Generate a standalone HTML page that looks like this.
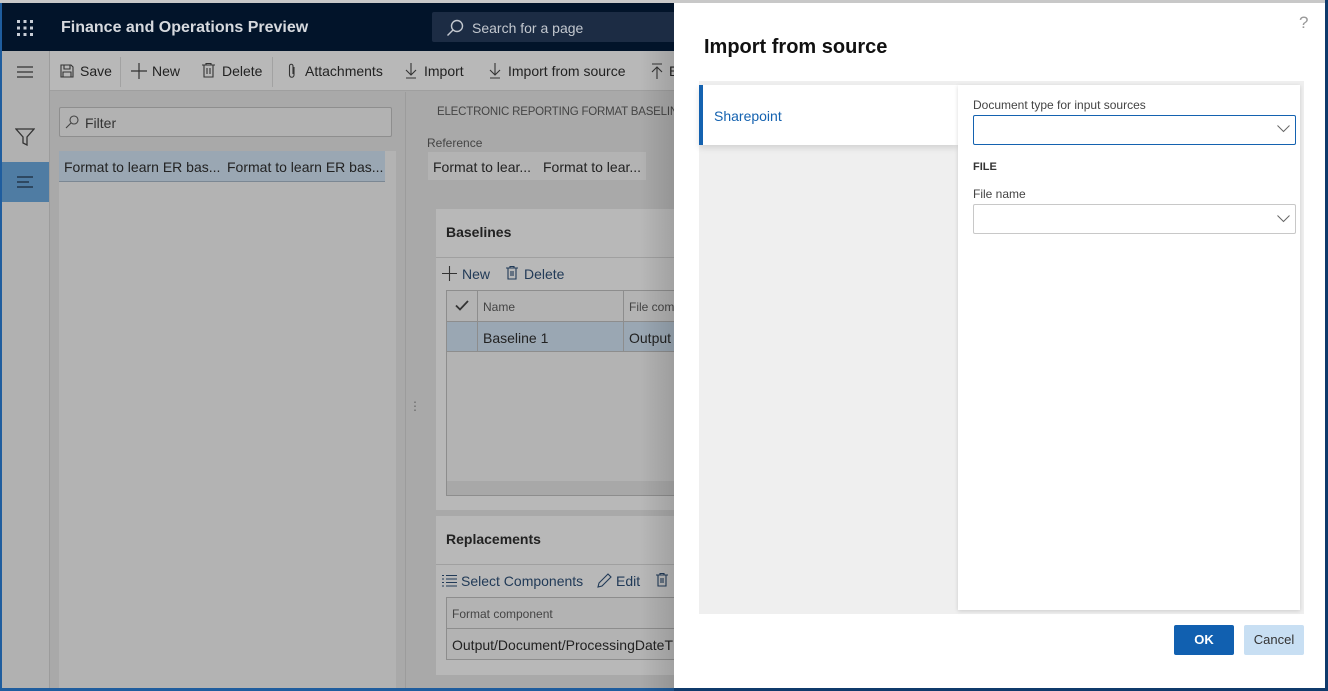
<!DOCTYPE html>
<html><head><meta charset="utf-8">
<style>
*{box-sizing:border-box;margin:0;padding:0}
body{width:1328px;height:691px;overflow:hidden;position:relative;font-family:"Liberation Sans",sans-serif;font-size:14px;color:#222;background:#a9a9a9}
.abs{position:absolute}
.t{position:absolute;white-space:nowrap}
svg{position:absolute}
</style></head><body>
<div class="abs" style="left:0;top:0;width:1328px;height:3px;background:#c8c8c8"></div>
<div class="abs" style="left:0;top:3px;width:2px;height:688px;background:#1f5d9e"></div>
<div class="abs" style="left:2px;top:3px;width:672px;height:48px;background:#02142a"></div>
<svg style="left:16px;top:19px" width="18" height="18" viewBox="0 0 18 18" fill="#c9ced6"><g><rect x="1" y="1" width="3" height="3"/><rect x="7.5" y="1" width="3" height="3"/><rect x="14" y="1" width="3" height="3"/><rect x="1" y="7.5" width="3" height="3"/><rect x="7.5" y="7.5" width="3" height="3"/><rect x="14" y="7.5" width="3" height="3"/><rect x="1" y="14" width="3" height="3"/><rect x="7.5" y="14" width="3" height="3"/><rect x="14" y="14" width="3" height="3"/></g></svg>
<div class="t" style="left:61px;top:19px;color:#d6d9de;font-size:16px;font-weight:bold">Finance and Operations Preview</div>
<div class="abs" style="left:432px;top:12px;width:242px;height:30px;background:#1c2c44;border-radius:2px 0 0 2px"></div>
<svg style="left:446px;top:19px" width="18" height="18" viewBox="0 0 18 18" fill="none" stroke="#c3c8cf" stroke-width="1.4"><circle cx="11" cy="7" r="5.5"/><path d="M7 11 L1.5 16.5"/></svg>
<div class="t" style="left:472px;top:20px;color:#c3c8cf;font-size:14px">Search for a page</div>
<div class="abs" style="left:2px;top:51px;width:48px;height:640px;background:#b1b1b1;border-right:1px solid #9c9c9c"></div>
<svg style="left:16px;top:65px" width="18" height="14" viewBox="0 0 18 14" stroke="#333" stroke-width="1.3"><path d="M1 2H17M1 7H17M1 12H17"/></svg>
<svg style="left:15px;top:128px" width="20" height="18" viewBox="0 0 20 18" fill="none" stroke="#333" stroke-width="1.3"><path d="M1 1H19L12 9V17L8 15V9Z"/></svg>
<div class="abs" style="left:2px;top:162px;width:47px;height:40px;background:#4f7ca3"></div>
<svg style="left:17px;top:175px" width="18" height="14" viewBox="0 0 18 14" stroke="#1b2a3a" stroke-width="1.2"><path d="M0 2H16M0 7H12M0 12H16"/></svg>
<div class="abs" style="left:50px;top:51px;width:624px;height:40px;background:#b8b8b8;border-bottom:1px solid #9f9f9f"></div>
<svg style="left:60px;top:64px" width="14" height="14" viewBox="0 0 14 14" fill="none" stroke="#333" stroke-width="1.1"><path d="M1 1H11L13 3V13H1Z M4 1V5H10V1 M3 13V8H11V13"/></svg>
<div class="t" style="left:80px;top:63px">Save</div>
<div class="abs" style="left:120px;top:57px;width:1px;height:30px;background:#a2a2a2"></div>
<svg style="left:131px;top:63px" width="16" height="16" viewBox="0 0 16 16" stroke="#333" stroke-width="1.2"><path d="M8 0V16M0 8H16"/></svg>
<div class="t" style="left:152px;top:63px">New</div>
<svg style="left:202px;top:63px" width="13" height="15" viewBox="0 0 13 15" fill="none" stroke="#333" stroke-width="1.1"><path d="M0 2H13M4 2V0.5H9V2M2 2V14H11V2M5 5V11M8 5V11"/></svg>
<div class="t" style="left:222px;top:63px">Delete</div>
<div class="abs" style="left:272px;top:57px;width:1px;height:30px;background:#a2a2a2"></div>
<svg style="left:287px;top:63px" width="10" height="16" viewBox="0 0 10 16" fill="none" stroke="#333" stroke-width="1.1"><path d="M7 4V12A2.2 2.2 0 0 1 2.5 12V3A1.6 1.6 0 0 1 6 3V11"/></svg>
<div class="t" style="left:305px;top:63px">Attachments</div>
<svg style="left:405px;top:63px" width="12" height="16" viewBox="0 0 12 16" fill="none" stroke="#333" stroke-width="1.1"><path d="M6 0V12M1 7L6 12L11 7M1 15H11"/></svg>
<div class="t" style="left:424px;top:63px">Import</div>
<svg style="left:489px;top:63px" width="12" height="16" viewBox="0 0 12 16" fill="none" stroke="#333" stroke-width="1.1"><path d="M6 0V12M1 7L6 12L11 7M1 15H11"/></svg>
<div class="t" style="left:508px;top:63px">Import from source</div>
<svg style="left:651px;top:63px" width="12" height="16" viewBox="0 0 12 16" fill="none" stroke="#333" stroke-width="1.1"><path d="M6 16V4M1 9L6 4L11 9M1 1H11"/></svg>
<div class="t" style="left:669px;top:63px">E</div>
<div class="abs" style="left:50px;top:92px;width:356px;height:599px;background:#a9a9a9;border-right:1px solid #9c9c9c"></div>
<div class="abs" style="left:59px;top:107px;width:333px;height:30px;border:1px solid #8e8e8e;background:#b2b2b2;border-radius:2px"></div>
<svg style="left:65px;top:115px" width="14" height="14" viewBox="0 0 14 14" fill="none" stroke="#444" stroke-width="1.1"><circle cx="9" cy="5" r="4"/><path d="M6 8L1 13"/></svg>
<div class="t" style="left:85px;top:115px;color:#333">Filter</div>
<div class="abs" style="left:59px;top:151px;width:337px;height:538px;background:#b3b3b3"></div>
<div class="abs" style="left:59px;top:151px;width:326px;height:31px;background:#9aa7b3;border-bottom:1px solid #7b8793"></div>
<div class="t" style="left:64px;top:159px">Format to learn ER bas...</div>
<div class="t" style="left:227px;top:159px">Format to learn ER bas...</div>
<div class="abs" style="left:407px;top:92px;width:267px;height:599px;background:#a9a9a9"></div>
<div class="t" style="left:409px;top:399px;color:#666;font-size:12px">⋮</div>
<div class="t" style="left:437px;top:106px;font-size:11.5px;letter-spacing:-0.2px;color:#444">ELECTRONIC REPORTING FORMAT BASELINE</div>
<div class="t" style="left:427px;top:136px;font-size:12px;color:#444">Reference</div>
<div class="abs" style="left:428px;top:152px;width:218px;height:28px;background:#b3b3b3"></div>
<div class="t" style="left:433px;top:159px">Format to lear...</div>
<div class="t" style="left:543px;top:159px">Format to lear...</div>
<div class="abs" style="left:436px;top:209px;width:238px;height:301px;background:#b8b8b8"></div>
<div class="t" style="left:446px;top:224px;font-weight:bold;font-size:14px">Baselines</div>
<div class="abs" style="left:436px;top:257px;width:238px;height:1px;background:#a0a0a0"></div>
<svg style="left:442px;top:266px" width="15" height="15" viewBox="0 0 15 15" stroke="#333" stroke-width="1.1"><path d="M7.5 0V15M0 7.5H15"/></svg>
<div class="t" style="left:462px;top:266px;color:#213a57">New</div>
<svg style="left:506px;top:266px" width="12" height="14" viewBox="0 0 12 14" fill="none" stroke="#213a57" stroke-width="1.1"><path d="M0 2H12M4 2V0.5H8V2M2 2V13H10V2M5 5V10M7 5V10"/></svg>
<div class="t" style="left:524px;top:266px;color:#213a57">Delete</div>
<div class="abs" style="left:446px;top:290px;width:228px;height:206px;border:1px solid #8d8d8d;border-right:none;background:#b3b3b3"></div>
<div class="abs" style="left:447px;top:321px;width:227px;height:1px;background:#8d8d8d"></div>
<div class="abs" style="left:477px;top:291px;width:1px;height:61px;background:#8d8d8d"></div>
<div class="abs" style="left:623px;top:291px;width:1px;height:61px;background:#8d8d8d"></div>
<svg style="left:455px;top:300px" width="14" height="11" viewBox="0 0 14 11" fill="none" stroke="#333" stroke-width="1.8"><path d="M1 5.5L5 9.5L13 1"/></svg>
<div class="t" style="left:483px;top:300px;font-size:12px;color:#444">Name</div>
<div class="t" style="left:629px;top:300px;font-size:12px;color:#444">File com</div>
<div class="abs" style="left:447px;top:322px;width:227px;height:30px;background:#9aa7b3;border-bottom:1px solid #8d8d8d"></div>
<div class="abs" style="left:477px;top:322px;width:1px;height:30px;background:#8d8d8d"></div>
<div class="abs" style="left:623px;top:322px;width:1px;height:30px;background:#8d8d8d"></div>
<div class="t" style="left:483px;top:330px">Baseline 1</div>
<div class="t" style="left:629px;top:330px">Output</div>
<div class="abs" style="left:447px;top:481px;width:227px;height:14px;background:#a8a8a8"></div>
<div class="abs" style="left:436px;top:516px;width:238px;height:159px;background:#b8b8b8"></div>
<div class="t" style="left:446px;top:531px;font-weight:bold">Replacements</div>
<div class="abs" style="left:436px;top:564px;width:238px;height:1px;background:#a0a0a0"></div>
<svg style="left:442px;top:574px" width="15" height="13" viewBox="0 0 15 13" stroke="#213a57" stroke-width="1.1"><path d="M4 1.5H15M4 5H15M4 8.5H15M4 12H15M0 1.5H2M0 5H2M0 8.5H2M0 12H2"/></svg>
<div class="t" style="left:461px;top:573px;color:#213a57">Select Components</div>
<svg style="left:597px;top:573px" width="15" height="15" viewBox="0 0 15 15" fill="none" stroke="#213a57" stroke-width="1.1"><path d="M1 14L2 10L11 1L14 4L5 13Z"/></svg>
<div class="t" style="left:616px;top:573px;color:#213a57">Edit</div>
<svg style="left:656px;top:573px" width="12" height="14" viewBox="0 0 12 14" fill="none" stroke="#213a57" stroke-width="1.1"><path d="M0 2H12M4 2V0.5H8V2M2 2V13H10V2M5 5V10M7 5V10"/></svg>
<div class="abs" style="left:446px;top:597px;width:228px;height:63px;border:1px solid #8d8d8d;border-right:none;background:#b3b3b3"></div>
<div class="abs" style="left:447px;top:628px;width:227px;height:1px;background:#8d8d8d"></div>
<div class="t" style="left:452px;top:607px;font-size:12px;color:#444">Format component</div>
<div class="t" style="left:452px;top:637px">Output/Document/ProcessingDateT</div>
<div class="abs" style="left:0;top:688px;width:674px;height:3px;background:#1f5d9e"></div>
<div class="abs" style="left:640px;top:51px;width:34px;height:640px;background:linear-gradient(to right,rgba(0,0,0,0),rgba(0,0,0,0.12))"></div>
<div class="abs" style="left:674px;top:3px;width:651px;height:685px;background:#fff"></div>
<div class="abs" style="left:1325px;top:0;width:3px;height:691px;background:#0f3a6b"></div>
<div class="abs" style="left:674px;top:688px;width:654px;height:3px;background:#0f3a6b"></div>
<div class="t" style="left:1299px;top:13px;font-size:17px;color:#999">?</div>
<div class="t" style="left:704px;top:36px;font-size:20px;font-weight:bold;color:#111">Import from source</div>
<div class="abs" style="left:699px;top:81px;width:605px;height:533px;background:#efefef"></div>
<div class="abs" style="left:699px;top:85px;width:259px;height:60px;background:#fff;box-shadow:0 3px 6px rgba(0,0,0,0.12)"></div>
<div class="abs" style="left:699px;top:85px;width:4px;height:60px;background:#1462b0"></div>
<div class="t" style="left:714px;top:108px;color:#1462b0">Sharepoint</div>
<div class="abs" style="left:958px;top:85px;width:342px;height:525px;background:#fff;box-shadow:0 1px 4px rgba(0,0,0,0.15)"></div>
<div class="t" style="left:973px;top:98px;font-size:12px;color:#444">Document type for input sources</div>
<div class="abs" style="left:973px;top:115px;width:323px;height:30px;border:1px solid #1462b0;border-radius:2px"></div>
<svg style="left:1277px;top:125px" width="13" height="8" viewBox="0 0 13 8" fill="none" stroke="#666" stroke-width="1"><path d="M0.5 0.5L6.5 6.5L12.5 0.5"/></svg>
<div class="t" style="left:973px;top:161px;font-size:11px;font-weight:bold;color:#333">FILE</div>
<div class="t" style="left:973px;top:187px;font-size:12px;color:#444">File name</div>
<div class="abs" style="left:973px;top:204px;width:323px;height:30px;border:1px solid #c8c8c8;border-radius:2px"></div>
<svg style="left:1277px;top:215px" width="13" height="8" viewBox="0 0 13 8" fill="none" stroke="#666" stroke-width="1"><path d="M0.5 0.5L6.5 6.5L12.5 0.5"/></svg>
<div class="abs" style="left:1174px;top:625px;width:60px;height:30px;background:#1160b0;border-radius:2px;color:#fff;font-weight:bold;font-size:13px;text-align:center;line-height:30px">OK</div>
<div class="abs" style="left:1244px;top:625px;width:60px;height:30px;background:#c8dff3;border-radius:2px;color:#333;font-size:13px;text-align:center;line-height:30px">Cancel</div>
</body></html>
